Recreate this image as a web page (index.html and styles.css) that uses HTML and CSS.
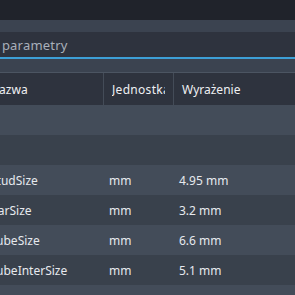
FILE: index.html
```html
<!DOCTYPE html>
<html>
<head>
    <meta charset="UTF-8">
    <title>Parametry</title>
    <link rel="stylesheet" href="styles.css">
</head>
<body>
    <div class="topbar"></div>
    <div class="panel">
        <div class="band"></div>
        <div class="search">
            <span class="search-text">Filtruj parametry</span>
        </div>
        <div class="band small"></div>
        <div class="table">
            <div class="row header">
                <div class="cell name">Nazwa</div>
                <div class="cell unit"><span class="clip">Jednostka</span></div>
                <div class="cell expr">Wyrażenie</div>
            </div>
            <div class="row light"></div>
            <div class="row dark"></div>
            <div class="row light">
                <div class="cell name">StudSize</div>
                <div class="cell unit">mm</div>
                <div class="cell expr">4.95 mm</div>
            </div>
            <div class="row dark">
                <div class="cell name">BarSize</div>
                <div class="cell unit">mm</div>
                <div class="cell expr">3.2 mm</div>
            </div>
            <div class="row light">
                <div class="cell name">TubeSize</div>
                <div class="cell unit">mm</div>
                <div class="cell expr">6.6 mm</div>
            </div>
            <div class="row dark">
                <div class="cell name">TubeInterSize</div>
                <div class="cell unit">mm</div>
                <div class="cell expr">5.1 mm</div>
            </div>
            <div class="row light"></div>
        </div>
    </div>
</body>
</html>
```

FILE: styles.css
```css
html, body {
    margin: 0;
    padding: 0;
    overflow: hidden;
}
body {
    font-family: "Noto Sans", "Open Sans", sans-serif;
    font-size: 12px;
    background-color: #20232b;
    color: #e6e9ee;
}
.topbar {
    height: 20px;
    background-color: #20232b;
}
.panel {
    background-color: #3a424e;
}
.band {
    height: 12px;
    background-color: #3b4350;
}
.band.small {
    height: 13px;
    border-bottom: 1px solid #4c5562;
}
.search {
    height: 27px;
    display: flex;
    align-items: center;
    box-sizing: border-box;
    padding-top: 1px;
    background-color: #2e333e;
    border-bottom: 2px solid #3d9fd6;
    margin-left: -38px;
}
.search-text {
    color: #a9b0ba;
    font-size: 13px;
    letter-spacing: 0.2px;
}
.row {
    display: flex;
    height: 30px;
    align-items: center;
}
.row.header {
    height: 32px;
    background-color: #2e333e;
}
.row.light {
    background-color: #434c59;
}
.row.dark {
    background-color: #39414c;
}
.cell {
    height: 100%;
    display: flex;
    align-items: center;
    white-space: nowrap;
    overflow: hidden;
    box-sizing: border-box;
}
.name {
    width: 113px;
    margin-left: -10px;
    padding-left: 0;
}
.unit {
    width: 70px;
    padding-left: 6px;
}
.expr {
    flex: 1;
    padding-left: 6px;
}
.header .cell {
    color: #eef0f3;
}
.header .unit,
.header .expr {
    border-left: 1px solid #444c58;
    padding-left: 8px;
}
.header .unit {
    padding-right: 8px;
    letter-spacing: 0.3px;
}
.clip {
    overflow: hidden;
}
```
